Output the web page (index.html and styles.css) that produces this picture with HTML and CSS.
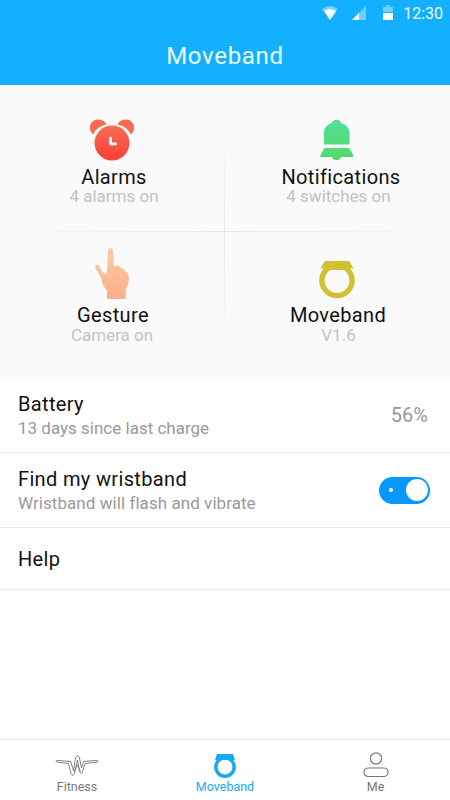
FILE: index.html
```html
<!DOCTYPE html>
<html lang="en">
<head>
    <meta charset="UTF-8">
    <title>Moveband</title>
    <meta name="viewport" content="width=device-width, initial-scale=1.0">
    <link rel="stylesheet" href="styles.css">
</head>
<body>
    <header>
        <div class="status-bar">
            <svg class="wifi" width="16" height="16" viewBox="0 0 16 16">
                <path d="M0 4Q8-2 16 4L8 15Z" fill="#fff" opacity=".4"/>
                <path d="M2 6Q8 2 14 6L8 15Z" fill="#fff"/>
            </svg>
            <svg class="signal" width="15" height="16" viewBox="0 0 15 16">
                <path d="M0 15L14 1V15Z" fill="#fff" opacity=".4"/>
                <path d="M0 15L7 8V15Z" fill="#fff"/>
            </svg>
            <svg class="power" width="10" height="16" viewBox="0 0 10 16">
                <path d="M0 2H3V0H7V2H10V7H0Z" fill="#fff" opacity=".4"/>
                <path d="M0 8H10V15H0Z" fill="#fff"/>
            </svg>
            <span>12:30</span>
        </div>
        <h1>Moveband</h1>
    </header>
    <main>
        <div class="features">
            <div class="feature">
                <div class="icon">
                    <svg width="46" height="42" viewBox="0 0 46 42">
                        <defs>
                            <linearGradient id="red" x1="0" y1="0" x2="0" y2="1">
                                <stop offset="0" stop-color="#fb6e55"/>
                                <stop offset="1" stop-color="#f83f35"/>
                            </linearGradient>
                        </defs>
                        <path d="M3 14.500C-2 7 3 .5 9 .5c4 0 7 1.500 8.500 5C11 7 6 11 4.500 15ZM43 14.500C48 7 43 .5 37 .5c-4 0-7 1.500-8.500 5 6.500 1.500 11.500 5.500 13 9.500Z" fill="#fa6b50"/>
                        <circle cx="23" cy="24" r="17.500" fill="url(#red)"/>
                        <path d="M21.600 19v5.900h5.200" fill="none" stroke="#fff" stroke-width="2.700" stroke-linecap="round" stroke-linejoin="round"/>
                    </svg>
                </div>
                <h2 class="alarms">Alarms</h2>
                <p class="alarms">4 alarms on</p>
            </div>
            <div class="feature">
                <div class="icon">
                    <svg width="36" height="42" viewBox="0 0 36 42">
                        <defs>
                            <linearGradient id="green" gradientUnits="userSpaceOnUse" x1="0" y1="0" x2="0" y2="42">
                                <stop offset="0" stop-color="#52e09a"/>
                                <stop offset="1" stop-color="#55d967"/>
                            </linearGradient>
                        </defs>
                        <path d="M5 25.500V14c0-5 3-8.500 8-10 .5-4.300 8.500-4.300 9 0 5 1.500 8.500 5 8.500 10v11.500ZM5.500 29h24.500l4.200 7q1 2-1 2H22c-1 4.300-8 4.300-9 0H2.500q-2 0-1-2Z" fill="url(#green)"/>
                    </svg>
                </div>
                <h2 class="notice">Notifications</h2>
                <p class="switches">4 switches on</p>
            </div>
            <div class="feature">
                <div class="icon">
                    <svg width="36" height="53" viewBox="0 0 36 53">
                        <defs>
                            <linearGradient id="skin" x1="0" y1="0" x2="0" y2="1">
                                <stop offset="0" stop-color="#fdc9a8"/>
                                <stop offset="1" stop-color="#fbaf86"/>
                            </linearGradient>
                        </defs>
                        <path d="M14 4c0-4 4.800-4 5 0l1 15.500c2-1.500 5.500-1 6.500 1.200 2.700.2 3.800 1.800 4 3.500 4 1 4.500 4 4.300 7 0 7-2.500 9-3.200 13V52H13v-8.500c-4-4-5-9-6-13L1.500 21c-1-3 2-4.500 4-1.500 1.200 3 3.200 6.500 5.700 7.500 1.300 0 1.800-1 1.900-3Z" fill="url(#skin)"/>
                    </svg>
                </div>
                <h2 class="gesture">Gesture</h2>
                <p>Camera on</p>
            </div>
            <div class="feature">
                <div class="icon ring">
                    <svg width="36" height="39" viewBox="0 0 36 39">
                        <path d="M7 1H29Q30.500 1 31.500 3L34.500 8.500H1.500L4.500 3Q5.500 1 7 1Z" fill="#cfc132"/>
                        <circle cx="18" cy="20.500" r="15.100" fill="none" stroke="#cfc132" stroke-width="5.400"/>
                        <path d="M8 7.500h20l-3 2.500H11Z" fill="#cfc132"/>
                    </svg>
                </div>
                <h2 class="band">Moveband</h2>
                <p class="switches">V1.6</p>
            </div>
        </div>
        <div class="row battery">
            <div>
                <h3>Battery</h3>
                <p>13 days since last charge</p>
            </div>
            <span class="percent">56%</span>
        </div>
        <div class="row find">
            <div>
                <h3>Find my wristband</h3>
                <p>Wristband will flash and vibrate</p>
            </div>
            <div class="switch">
                <span class="dot"></span>
                <span class="knob"></span>
            </div>
        </div>
        <div class="row help">
            <h3>Help</h3>
        </div>
    </main>
    <nav>
        <div class="tab fitness">
            <svg width="44" height="24" viewBox="0 0 44 24" fill="none" stroke="#777" stroke-width=".9" stroke-linejoin="round">
                <path d="M1.500 7Q0 6 2 5.300L15.500 6.500L18.500 15.500L20.500 3Q22.500-2 24.500 3L26.500 13L28.500 6.500L42 5.300Q44 6 42.500 7L30 8.500L27.500 17Q26 20 24.500 16.500L22.500 5L19.500 18.500Q18 22 16 18.500L13.500 8.500Z"/>
                <path d="M19 16.500L22.500 10L25.500 16.500"/>
            </svg>
            <span>Fitness</span>
        </div>
        <div class="tab active">
            <svg width="24" height="25" viewBox="0 0 24 25">
                <path d="M4 0H20L22 6H2Z" fill="#18a9ee"/>
                <circle cx="12" cy="13" r="9.200" fill="none" stroke="#18a9ee" stroke-width="3.500"/>
            </svg>
            <span>Moveband</span>
        </div>
        <div class="tab me">
            <svg width="26" height="27" viewBox="0 0 26 27" fill="none" stroke="#777" stroke-width="1.200">
                <circle cx="13" cy="6.500" r="5.600"/>
                <rect x="1" y="16" width="24" height="8.500" rx="4.250"/>
            </svg>
            <span>Me</span>
        </div>
    </nav>
</body>
</html>
```

FILE: styles.css
```css
body {
    font-family: Roboto, "Noto Sans", sans-serif;
    margin: 0;
    height: 800px;
    display: flex;
    flex-direction: column;
    background: #fff;
    overflow: hidden;
}
h1, h2, h3, p {
    margin: 0;
    font-weight: 400;
}
header {
    height: 85px;
    background: #13b0ff;
    color: #e9fdff;
}
.status-bar {
    display: flex;
    justify-content: flex-end;
    align-items: center;
    height: 26px;
    padding-right: 7px;
    font-size: 16px;
}
.wifi {
    margin-right: 14px;
}
.signal {
    margin-right: 16px;
}
.power {
    margin-right: 10px;
}
h1 {
    text-align: center;
    font-size: 24px;
    line-height: 28px;
    margin-top: 16px;
    letter-spacing: 0.7px;
}
main {
    flex: 1;
}
/* Four shortcuts, with a faint cross between them */
.features {
    display: grid;
    grid-template-columns: 224px 226px;
    grid-template-rows: 146px 147px;
    background:
        linear-gradient(90deg, transparent, #e8e8e8 50%, transparent) 0 146px / 100% 1px no-repeat,
        linear-gradient(transparent, #e8e8e8 50%, transparent) 224px 50px / 1px 200px no-repeat,
        #fafafa;
}
.feature {
    display: flex;
    flex-direction: column;
    align-items: center;
}
.icon {
    display: flex;
    align-items: flex-end;
    height: 76px;
    margin-bottom: 6px;
}
.feature:nth-child(n+3) .icon {
    height: 69px;
    margin-bottom: 5px;
}
.feature .ring {
    padding-bottom: 1px;
    box-sizing: border-box;
}
h2 {
    font-size: 20px;
    line-height: 20px;
    letter-spacing: 0.35px;
    color: #111;
}
.notice {
    padding-left: 8px;
}
.alarms {
    padding-left: 4px;
}
.switches {
    padding-left: 3px;
}
.gesture, .band {
    padding-left: 2px;
}
.feature p {
    font-size: 17px;
    line-height: 18px;
    color: #c3c3c3;
}
.feature:nth-child(n+3) p {
    line-height: 20px;
}
.row {
    display: flex;
    justify-content: space-between;
    align-items: center;
    box-sizing: border-box;
    height: 75px;
    padding: 0 20px 0 18px;
    border-bottom: 1px solid #ececec;
}
.help {
    height: 62px;
}
h3 {
    font-size: 20px;
    line-height: 26px;
    letter-spacing: 0.35px;
    color: #111;
}
.row p {
    font-size: 17px;
    line-height: 22px;
    color: #999;
}
.find p {
    letter-spacing: 0.06px;
}
.percent {
    font-size: 20px;
    color: #999;
    padding-right: 2px;
}
.switch {
    display: flex;
    justify-content: space-between;
    align-items: center;
    box-sizing: border-box;
    width: 51px;
    height: 27px;
    padding: 0 2px 0 10px;
    border-radius: 14px;
    background: #0798ff;
}
.dot {
    width: 4px;
    height: 4px;
    border-radius: 50%;
    background: #fff;
}
.knob {
    width: 22px;
    height: 22px;
    border-radius: 50%;
    background: #fff;
}
nav {
    display: flex;
    box-sizing: border-box;
    height: 61px;
    border-top: 1px solid #e5e5e5;
}
.tab {
    box-sizing: border-box;
    width: 150px;
    display: flex;
    flex-direction: column;
    justify-content: flex-end;
    align-items: center;
    padding-bottom: 5px;
    font-size: 12.5px;
    line-height: 16px;
    color: #777;
}
.fitness {
    padding-left: 4px;
}
.me {
    padding-left: 1px;
}
.active {
    color: #18a9ee;
}
```
